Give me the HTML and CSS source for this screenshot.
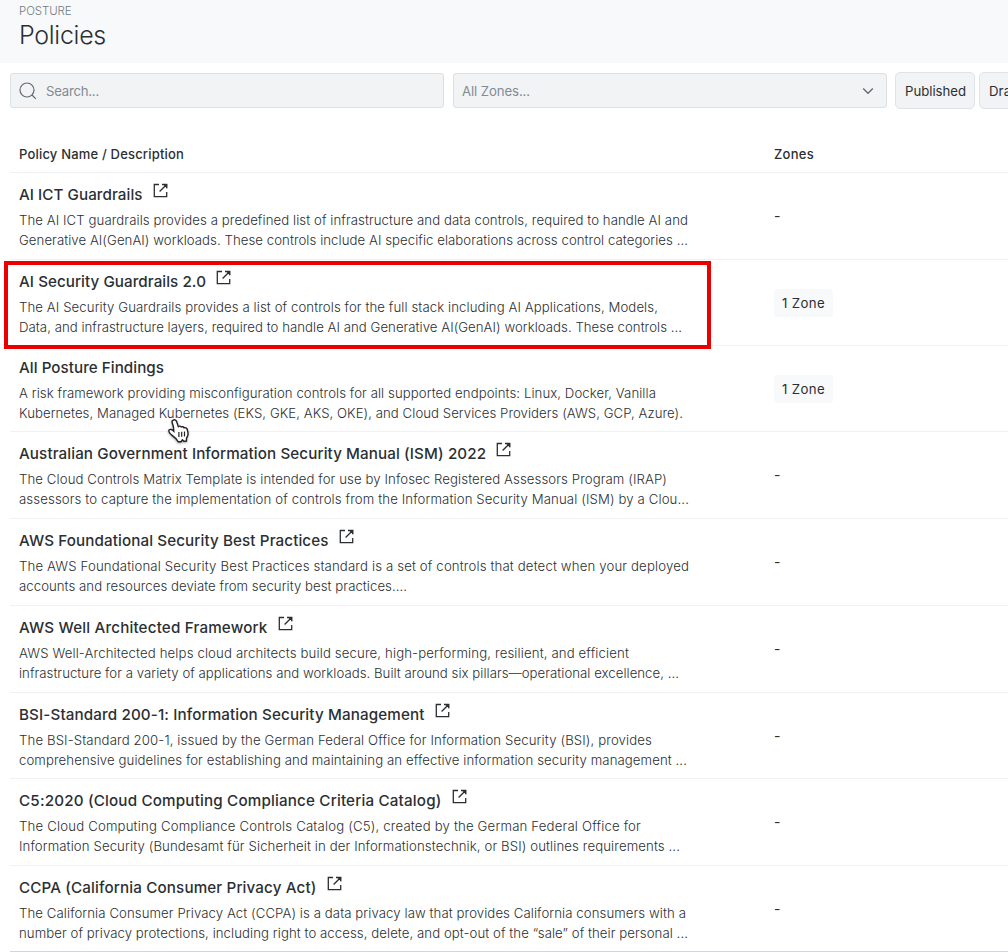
FILE: index.html
```html
<!DOCTYPE html>
<html lang="en">
<head>
<meta charset="utf-8">
<title>Policies</title>
<link rel="stylesheet" href="styles.css">
</head>
<body>
<svg class="defs" aria-hidden="true">
  <symbol id="open" viewBox="0 0 15 15"><path d="M6 1.5H1.3V13.6H13.7V9M9 1.5H13.7V5.2M13.4 1.7L6.6 8.5" fill="none" stroke="currentColor" stroke-width="1.3"/><path d="M9.6 1H14.2V5.6Z" fill="currentColor"/></symbol>
</svg>
<header class="page-head">
  <div class="crumb"><span data-w="52.5">POSTURE</span></div>
  <h1><span data-w="87">Policies</span></h1>
</header>
<div class="filters">
  <div class="field search">
    <svg class="glass" viewBox="0 0 18 18"><circle cx="8" cy="8" r="7" /><path d="M13 13L16.8 16.8"/></svg>
    <span data-w="53">Search...</span>
  </div>
  <div class="field zones">
    <span data-w="68">All Zones...</span>
    <svg class="chev" viewBox="0 0 12 8"><path d="M1.2 1.5L6 6.3L10.8 1.5"/></svg>
  </div>
  <button class="toggle"><span data-w="61">Published</span></button>
  <button class="toggle last"><span data-w="31">Draft</span></button>
</div>
<main class="table">
  <div class="thead"><span data-w="165">Policy Name / Description</span><span data-w="40">Zones</span></div>
  <section class="row">
    <div class="policy">
      <h2><span data-w="123.5">AI ICT Guardrails</span><svg class="open"><use href="#open"/></svg></h2>
      <p><span data-w="669">The AI ICT guardrails provides a predefined list of infrastructure and data controls, required to handle AI and</span><span data-w="669">Generative AI(GenAI) workloads. These controls include AI specific elaborations across control categories ...</span></p>
    </div>
    <div class="zone">-</div>
  </section>
  <section class="row short marked">
    <div class="policy">
      <h2><span data-w="187">AI Security Guardrails 2.0</span><svg class="open"><use href="#open"/></svg></h2>
      <p><span data-w="639">The AI Security Guardrails provides a list of controls for the full stack including AI Applications, Models,</span><span data-w="663">Data, and infrastructure layers, required to handle AI and Generative AI(GenAI) workloads. These controls ...</span></p>
    </div>
    <div class="badge"><span data-w="43">1 Zone</span></div>
  </section>
  <section class="row short">
    <div class="policy">
      <h2><span data-w="145">All Posture Findings</span></h2>
      <p><span data-w="637">A risk framework providing misconfiguration controls for all supported endpoints: Linux, Docker, Vanilla</span><span data-w="664">Kubernetes, Managed Kubernetes (EKS, GKE, AKS, OKE), and Cloud Services Providers (AWS, GCP, Azure).</span></p>
    </div>
    <div class="badge"><span data-w="43">1 Zone</span></div>
    <svg class="pointer" viewBox="0 0 24 26"><path d="M6.2 2.2C7.8 1.2 9.2 2.2 9.7 3.8L11.3 8.6C12.3 7.8 13.6 8 14.2 9C15.3 8.3 16.5 8.7 17 9.8C18.4 9.2 19.7 9.9 20.2 11.3L21 14.8C21.5 17.3 20.3 18.7 19.5 20.3L19.4 23L16.8 23.2L15.4 21.8L14 23.7L11.2 23.8C9.8 21 7.4 18.8 4.5 16.8C2.6 15.4 1.2 13 2.1 12C3.2 10.8 5.1 11.5 6.8 13.2L6.4 8.7L5.2 4.8C4.8 3.6 5.2 2.6 6.2 2.2Z" fill="#fff" stroke="#222" stroke-width="1.4"/><path d="M11.9 14V19M14.7 13.8V18.8M17.5 13.6V18.6" stroke="#222" stroke-width="1.2"/></svg>
  </section>
  <section class="row">
    <div class="policy">
      <h2><span data-w="467">Australian Government Information Security Manual (ISM) 2022</span><svg class="open"><use href="#open"/></svg></h2>
      <p><span data-w="648">The Cloud Controls Matrix Template is intended for use by Infosec Registered Assessors Program (IRAP)</span><span data-w="670">assessors to capture the implementation of controls from the Information Security Manual (ISM) by a Clou...</span></p>
    </div>
    <div class="zone">-</div>
  </section>
  <section class="row">
    <div class="policy">
      <h2><span data-w="309.5">AWS Foundational Security Best Practices</span><svg class="open"><use href="#open"/></svg></h2>
      <p><span data-w="670">The AWS Foundational Security Best Practices standard is a set of controls that detect when your deployed</span><span data-w="388">accounts and resources deviate from security best practices....</span></p>
    </div>
    <div class="zone">-</div>
  </section>
  <section class="row">
    <div class="policy">
      <h2><span data-w="248.5">AWS Well Architected Framework</span><svg class="open"><use href="#open"/></svg></h2>
      <p><span data-w="610">AWS Well-Architected helps cloud architects build secure, high-performing, resilient, and efficient</span><span data-w="660">infrastructure for a variety of applications and workloads. Built around six pillars—operational excellence, ...</span></p>
    </div>
    <div class="zone">-</div>
  </section>
  <section class="row short">
    <div class="policy">
      <h2><span data-w="405.5">BSI-Standard 200-1: Information Security Management</span><svg class="open"><use href="#open"/></svg></h2>
      <p><span data-w="633">The BSI-Standard 200-1, issued by the German Federal Office for Information Security (BSI), provides</span><span data-w="668">comprehensive guidelines for establishing and maintaining an effective information security management ...</span></p>
    </div>
    <div class="zone">-</div>
  </section>
  <section class="row">
    <div class="policy">
      <h2><span data-w="422.5">C5:2020 (Cloud Computing Compliance Criteria Catalog)</span><svg class="open"><use href="#open"/></svg></h2>
      <p><span data-w="622">The Cloud Computing Compliance Controls Catalog (C5), created by the German Federal Office for</span><span data-w="661">Information Security (Bundesamt für Sicherheit in der Informationstechnik, or BSI) outlines requirements ...</span></p>
    </div>
    <div class="zone">-</div>
  </section>
  <section class="row short end">
    <div class="policy">
      <h2><span data-w="297.5">CCPA (California Consumer Privacy Act)</span><svg class="open"><use href="#open"/></svg></h2>
      <p><span data-w="667">The California Consumer Privacy Act (CCPA) is a data privacy law that provides California consumers with a</span><span data-w="669">number of privacy protections, including right to access, delete, and opt-out of the “sale” of their personal ...</span></p>
    </div>
    <div class="zone">-</div>
  </section>
</main>
<script src="fit.js"></script>
</body>
</html>
```
FILE: styles.css
```css
*, *::before { box-sizing: border-box; }
body {
  margin: 0;
  width: 1008px;
  height: 952px;
  overflow: hidden;
  background: #fff;
  color: #2b2f33;
  font-family: Inter, "Liberation Sans", sans-serif;
}
.defs { display: none; }
[data-w] { display: inline-block; white-space: nowrap; }
.page-head { height: 63px; padding: 3px 0 0 19px; background: #f8f9fb; }
.crumb { font-size: 11.5px; line-height: 16px; font-weight: 300; color: #737a82; }
h1 { margin: 0; font-size: 25px; line-height: 32px; font-weight: 300; }
.filters { display: flex; align-items: flex-start; width: 998px; height: 74px; margin-left: 10px; padding-top: 9px; overflow: hidden; }
.field {
  display: flex;
  align-items: center;
  flex: none;
  width: 434px;
  height: 35px;
  margin-top: 1px;
  border: 1px solid #dbe0e5;
  border-radius: 3px;
  background: #f1f3f5;
  color: #838b93;
  font-size: 13.2px;
}
.search { padding-left: 8px; gap: 9px; }
.glass { width: 18px; height: 18px; fill: none; stroke: #626a72; stroke-width: 1.2; }
.zones { margin-left: 9px; padding: 0 12px 0 8px; justify-content: space-between; }
.chev { width: 12px; height: 8px; fill: none; stroke: #626a72; stroke-width: 1.3; }
.toggle {
  flex: none;
  width: 80px;
  height: 37px;
  margin: 0 0 0 8px;
  padding: 0 0 0 9px;
  border: 1px solid #dfe3e8;
  border-radius: 5px;
  background: #f1f3f5;
  color: #2b2f33;
  font: 400 13.2px Inter, sans-serif;
  text-align: left;
}
.toggle.last { margin-left: 4px; }
.table { display: flex; flex-direction: column; margin-left: 10px; }
.thead {
  display: grid;
  grid-template-columns: 755px 1fr;
  justify-items: start;
  height: 36px;
  padding-left: 9px;
  border-bottom: 1px solid #f0f1f2;
  font-size: 13px;
  line-height: 34px;
  font-weight: 500;
}
.row {
  position: relative;
  display: grid;
  grid-template-columns: 755px 1fr;
  align-items: start;
  height: 87px;
  padding: 9px 0 0 9px;
  border-bottom: 1px solid #f0f1f2;
}
.row.short { height: 86px; }
.row.end { border-color: #d4d6dc; }
h2 {
  display: flex;
  gap: 10px;
  margin: 0;
  height: 27.5px;
  font-size: 15.2px;
  line-height: 25px;
  font-weight: 500;
}
.open { width: 15px; height: 15px; margin-top: 1px; }
.policy p { margin: 0; font-size: 13.2px; line-height: 20.3px; font-weight: 300; }
.policy p span { display: block; width: max-content; }
.zone { padding-top: 25px; font-size: 14px; line-height: 17px; }
.badge {
  width: 59px;
  height: 28px;
  margin-top: 20px;
  padding-left: 8px;
  border-radius: 3px;
  background: #f8f9fb;
  font-size: 13.2px;
  line-height: 28px;
}
.marked::before {
  content: "";
  position: absolute;
  left: -6px;
  top: 1px;
  z-index: 1;
  width: 707px;
  height: 88px;
  border: 4px solid #eb0000;
}
.pointer {
  position: absolute;
  left: 157px;
  top: 72px;
  z-index: 1;
  width: 24px;
  height: 26px;
  filter: drop-shadow(0 1px 1px rgba(0, 0, 0, .35));
}
```
FILE: fit.js
```js
for (const el of document.querySelectorAll("[data-w]")) {
  const target = parseFloat(el.dataset.w);
  const natural = el.getBoundingClientRect().width;
  el.style.letterSpacing = (target - natural) / el.textContent.length + "px";
}
```
